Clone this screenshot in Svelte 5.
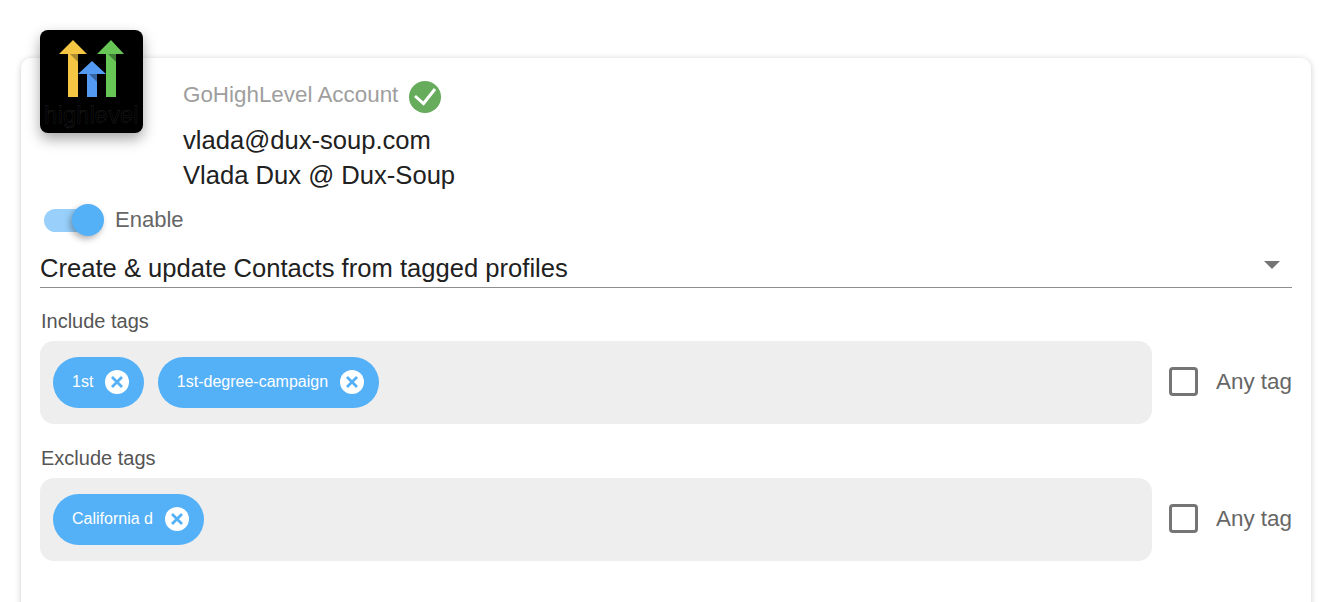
<script>
  const groups = [
    { label: "Include tags", tags: ["1st", "1st-degree-campaign"] },
    { label: "Exclude tags", tags: ["California d"] }
  ];
</script>

<div class="page">
  <section class="card">
    <header class="account">
      <div class="logo">
        <svg class="arrows" viewBox="0 0 103 75" width="103" height="75" aria-hidden="true">
          <path d="M33 10L19 24H28V67H38V24H47Z" fill="#f5c544" />
          <path d="M71 10L57 24H66V67H76V24H84Z" fill="#68c656" />
          <path d="M30 24H38V32Z" fill="#a98a2f" />
          <path d="M68 24H76V32Z" fill="#3f7f36" />
          <path d="M52 31L38 44H47V67H57V44H66Z" fill="#559af2" />
          <path d="M49 44H57V52Z" fill="#37659f" />
        </svg>
        <span class="wordmark">highlevel</span>
      </div>
      <div class="identity">
        <div class="title">
          <span>GoHighLevel Account</span>
          <svg viewBox="0 0 32 32" width="32" height="32" aria-hidden="true">
            <circle cx="16" cy="16" r="16" fill="#66ac5c" />
            <path d="M6 15L14.5 22.5L26 8" fill="none" stroke="#fff" stroke-width="3" />
          </svg>
        </div>
        <div class="line">vlada@dux-soup.com</div>
        <div class="line">Vlada Dux @ Dux-Soup</div>
      </div>
    </header>

    <div class="enable">
      <span class="switch"><span class="thumb"></span></span>
      <span>Enable</span>
    </div>

    <div class="select">
      <span>Create &amp; update Contacts from tagged profiles</span>
      <span class="caret"></span>
    </div>

    {#each groups as group}
      <div class="group">
        <div class="group-label">{group.label}</div>
        <div class="group-row">
          <div class="tagbox">
            {#each group.tags as tag}
              <span class="chip">
                <span class="chip-text">{tag}</span>
                <svg viewBox="0 0 24 24" width="24" height="24" aria-hidden="true">
                  <circle cx="12" cy="12" r="12" fill="#fff" />
                  <path d="M7 7L17 17M17 7L7 17" stroke="#54b0f7" stroke-width="2.8" fill="none" />
                </svg>
              </span>
            {/each}
          </div>
          <label class="any">
            <span class="box"></span>
            <span>Any tag</span>
          </label>
        </div>
      </div>
    {/each}
  </section>
</div>

<style>
  :global(body) {
    background: #fff;
    font-family: "Liberation Sans", Arial, sans-serif;
  }

  .page {
    height: 602px;
    overflow: hidden;
    padding: 58px 25px 0 21px;
    box-sizing: border-box;
  }

  .card {
    background: #fff;
    border-radius: 10px;
    box-shadow: 0 1px 6px rgba(0, 0, 0, 0.2);
    height: 640px;
    padding: 0 19px;
    box-sizing: border-box;
  }

  .account {
    display: flex;
    gap: 40px;
  }

  .logo {
    width: 103px;
    height: 103px;
    margin-top: -28px;
    background: #000;
    border-radius: 8px;
    box-shadow: 0 6px 14px rgba(0, 0, 0, 0.35);
    position: relative;
    overflow: hidden;
    flex: none;
  }

  .arrows {
    display: block;
  }

  .wordmark {
    display: block;
    position: absolute;
    left: 0;
    right: 0;
    top: 72px;
    text-align: center;
    font-size: 23.5px;
    line-height: 26px;
    letter-spacing: 0.2px;
    color: #000;
    -webkit-text-stroke: 0.25px #3a3a3a;
  }

  .identity {
    padding-top: 23px;
  }

  .title {
    display: flex;
    align-items: center;
    gap: 11px;
    height: 32px;
    margin-bottom: 10px;
    font-size: 22.4px;
    color: #9e9e9e;
  }

  .title span {
    position: relative;
    top: -2px;
  }

  .line {
    font-size: 25.6px;
    line-height: 35px;
    color: #212121;
  }

  .enable {
    display: flex;
    align-items: center;
    gap: 15px;
    margin-top: 11px;
    height: 32px;
    font-size: 22px;
    color: #666;
  }

  .switch {
    width: 56px;
    height: 23px;
    margin-left: 4px;
    border-radius: 12px;
    background: #98d0fb;
    display: flex;
    align-items: center;
    justify-content: flex-end;
  }

  .thumb {
    width: 32px;
    height: 32px;
    border-radius: 50%;
    background: #54b0f7;
    margin-right: -4px;
    box-shadow: -2px 3px 6px rgba(0, 0, 0, 0.3);
    flex: none;
  }

  .select {
    display: flex;
    align-items: center;
    justify-content: space-between;
    height: 48px;
    box-sizing: border-box;
    margin-top: 4px;
    padding: 10px 12px 0 0;
    border-bottom: 1px solid #8e8e8e;
    font-size: 25.6px;
    color: #212121;
  }

  .caret {
    width: 0;
    height: 0;
    border-left: 8px solid transparent;
    border-right: 8px solid transparent;
    border-top: 8px solid #757575;
    margin-top: -8px;
  }

  .group {
    margin-top: 22px;
  }

  .group + .group {
    margin-top: 23px;
  }

  .group-label {
    font-size: 20px;
    line-height: 23px;
    color: #555;
    padding-left: 1px;
  }

  .group-row {
    display: flex;
    align-items: center;
    gap: 17px;
    margin-top: 8px;
  }

  .tagbox {
    flex: 1;
    height: 83px;
    box-sizing: border-box;
    padding: 16px 13px;
    background: #eee;
    border-radius: 14px;
    display: flex;
    gap: 13.5px;
    align-items: flex-start;
  }

  .chip {
    display: flex;
    align-items: center;
    gap: 12px;
    height: 51px;
    padding: 0 15px 0 19px;
    border-radius: 26px;
    background: #54b0f7;
    color: #fff;
    font-size: 16px;
  }

  .chip-text {
    margin-top: -2px;
  }

  .chip svg {
    margin-top: -1px;
  }

  .any {
    display: flex;
    align-items: center;
    gap: 18px;
    width: 123px;
    margin-top: -2px;
    font-size: 22.4px;
    color: #666;
    white-space: nowrap;
  }

  .box {
    width: 29px;
    height: 29px;
    box-sizing: border-box;
    border: 3px solid #757575;
    border-radius: 4px;
    flex: none;
  }
</style>
